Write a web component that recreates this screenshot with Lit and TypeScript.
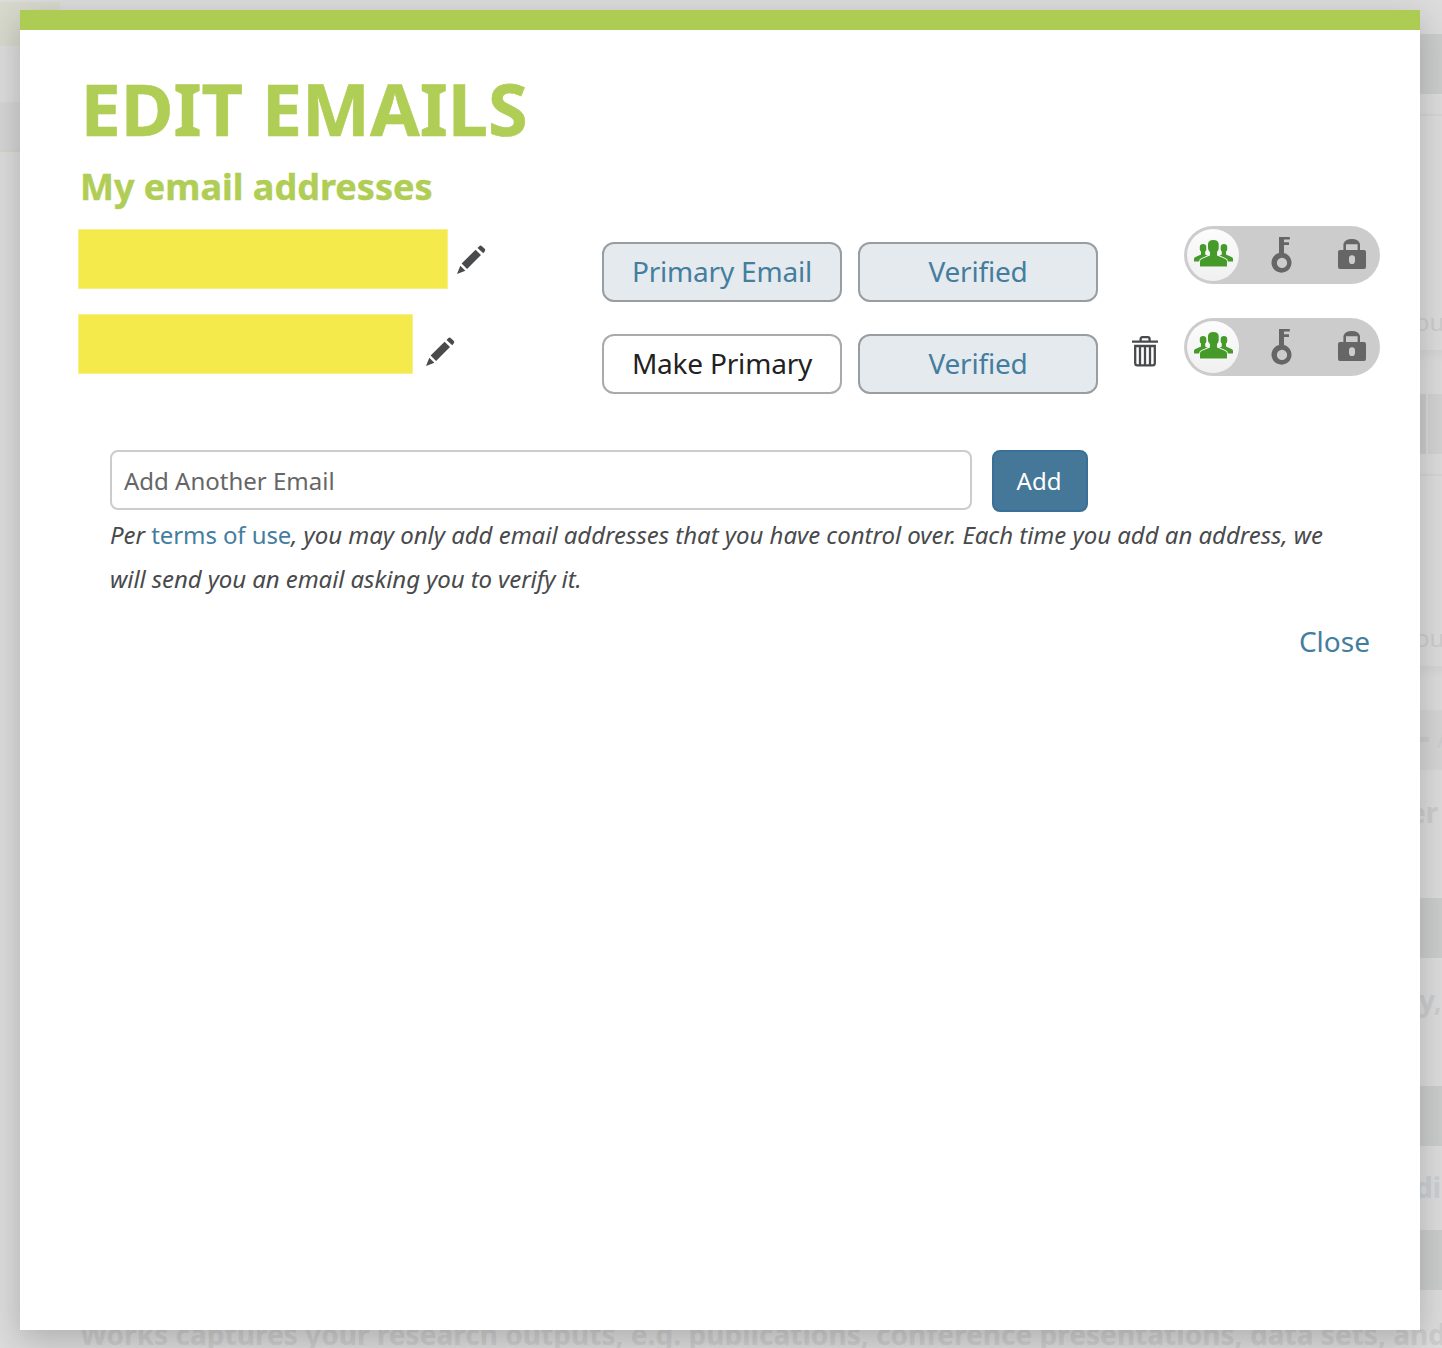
import { LitElement, html, css, svg, nothing } from "lit";
import { customElement, property, state } from "lit/decorators.js";

interface EmailEntry {
  width: number;
  primary: boolean;
}

const pencil = svg`
  <path d="M0 30 L3.4 21.4 L8.7 26.7 Z"></path>
  <path d="M4.8 19.2 L19.2 4.8 L24.8 10.4 L10.4 24.8 Z"></path>
  <path d="M21.2 3 L23 1.2 Q24.4 -.2 25.8 1.2 L28.6 4 Q30 5.4 28.6 6.8 L27.2 8.6 Z"></path>`;

const trash = svg`
  <path d="M0 5.6 H26 M8.6 5 V3.2 Q8.6 1.2 10.4 1.2 H15.8 Q17.6 1.2 17.6 3.2 V5"></path>
  <path d="M3.2 10 H22.8 V27 Q22.8 29.4 20.6 29.4 H5.4 Q3.2 29.4 3.2 27 Z M8 10 V29 M13 10 V29 M18 10 V29"></path>`;

const group = svg`
  <path d="M5.8 6.6 Q6 4 9 4 Q12.1 4 12.3 6.6 V9.4 Q12.1 10.8 11.2 11.6 V14.6 L15 16.4 V21.6 H0 V18.8 Q0 17.8 1 17.3 L7 14.6 V11.6 Q6 10.8 5.8 9.4Z"></path>
  <path d="M33.2 6.6 Q33 4 30 4 Q26.9 4 26.7 6.6 V9.4 Q26.9 10.8 27.8 11.6 V14.6 L24 16.4 V21.6 H39 V18.8 Q39 17.8 38 17.3 L32 14.6 V11.6 Q33 10.8 33.2 9.4Z"></path>
  <path class="front" d="M14 4 Q14.4 0 19.3 0 Q24.3 0 24.7 4 V8.6 Q24.4 10.8 23 12 V15.4 L31.4 19 Q33 19.8 33 21.4 V26.6 H6 V21.4 Q6 19.8 7.6 19 L16 15.4 V12 Q14.4 10.8 14 8.6Z"></path>`;

const key = svg`
  <path fill-rule="evenodd" d="M7 0 H17.8 V2.5 H12 V5.3 H17 V8 H12 V16 A10 10 0 1 1 7 16Z M10 20.8 A5.1 5.1 0 1 0 10 31.1 A5.1 5.1 0 1 0 10 20.8Z"></path>`;

const lock = svg`
  <path fill-rule="evenodd" d="M5.4 11 V5 Q7 0 13.8 0 Q20.6 0 22 5 V11 H26 Q28 11 28 13 V28 Q28 30 26 30 H2 Q0 30 0 28 V13 Q0 11 2 11Z M8 11 H19.6 V5.2 H8Z M14 16.2 A2.9 3 0 0 0 11 19 V22 A2.9 3 0 0 0 17 22 V19 A2.9 3 0 0 0 14 16.2Z"></path>`;

@customElement("privacy-toggle")
export class PrivacyToggle extends LitElement {
  static styles = css`
    :host { display: block; }
    .track {
      box-sizing: border-box;
      width: 196px;
      height: 58px;
      border-radius: 29px;
      background: #ccc;
      padding: 3px 0 0 3px;
      display: grid;
      grid-template-columns: 52px 1fr 1fr;
    }
    .seat { height: 52px; display: flex; }
    .knob {
      border-radius: 50%;
      background: linear-gradient(#fcfcfc, #f0f0f0);
      fill: #459a29;
      padding: 11px 0 0 7px;
      box-sizing: border-box;
    }
    .front { stroke: #f6f6f6; stroke-width: 1.8; paint-order: stroke; }
    .key { fill: #666; padding: 8px 0 0 32.5px; }
    .lock { fill: #666; padding: 10px 0 0 28px; }
    svg { display: block; flex: none; overflow: visible; }
  `;
  render() {
    return html`<div class="track">
      <div class="seat knob"><svg width="39" height="27">${group}</svg></div>
      <div class="seat key"><svg width="20" height="36">${key}</svg></div>
      <div class="seat lock"><svg width="28" height="30">${lock}</svg></div>
    </div>`;
  }
}

@customElement("email-row")
export class EmailRow extends LitElement {
  @property({ attribute: false }) entry!: EmailEntry;

  static styles = css`
    :host { display: block; }
    .row {
      height: 92px;
      display: grid;
      grid-template-columns: 524px 256px 240px 86px 196px;
      align-items: start;
    }
    .address { display: flex; gap: 8.5px; }
    .address.second { gap: 13px; }
    .mask {
      box-sizing: border-box;
      height: 60px;
      background: #f4ea4c;
      border: 1px solid #f7f08a;
      margin-top: 3px;
    }
    .second .mask { margin-top: -4px; }
    .pencil { fill: #494a4c; margin-top: 19px; }
    svg { display: block; overflow: visible; flex: none; }
    .pill {
      box-sizing: border-box;
      width: 240px;
      height: 60px;
      margin-top: 16px;
      border: 2px solid #989da1;
      border-radius: 12px;
      background: #e5eaee;
      color: #447e9f;
      font: 28px/54px "Noto Sans", sans-serif;
      letter-spacing: -0.2px;
      text-align: center;
      white-space: nowrap;
      padding: 0 0 2px;
    }
    .action { background: #fff; border-color: #aaa; color: #222; }
    .trash { fill: none; stroke: #494a4c; stroke-width: 2.3; margin: 18px 0 0 34px; }
  `;
  render() {
    const { primary, width } = this.entry;
    return html`<div class="row">
      <div class="address ${primary ? "" : "second"}">
        <div class="mask" style="width:${width}px"></div>
        <svg class="pencil" width="29" height="29" viewBox="0 0 30 30">${pencil}</svg>
      </div>
      ${primary
        ? html`<div class="pill">Primary Email</div>`
        : html`<button class="pill action">Make Primary</button>`}
      <div class="pill">Verified</div>
      <div>${primary ? nothing : html`<svg class="trash" width="26" height="31">${trash}</svg>`}</div>
      <privacy-toggle></privacy-toggle>
    </div>`;
  }
}

@customElement("page-backdrop")
export class PageBackdrop extends LitElement {
  static styles = css`
    :host { display: block; height: 1348px; background: #dcdcdc; overflow: hidden; }
    .page { display: grid; grid-template-columns: 60px 1fr 22px; height: 1318px; }
    .col { display: flex; flex-direction: column; overflow: hidden; }
    .logo { height: 44px; margin-top: 2px; background: #d7d9cd; }
    .tab { height: 48px; margin-top: 56px; background: #d5d5d5; border-bottom: 2px solid #d4d4cb; }
    .gap { flex: none; }
    .bar { flex: none; height: 60px; background: #cbcdcc; }
    .split { background: linear-gradient(90deg, #cbcdcc 6px, #dadada 6px 8px, #d3d3d3 8px); }
    .soft { background: #d5d5d5; }
    .rule { flex: none; height: 2px; background: #d5d5d5; }
    .fade { flex: none; height: 12px; background: linear-gradient(#d4d4d4, #dcdcdc); }
    .text {
      flex: none;
      height: 40px;
      font: 24px/40px "Noto Sans", sans-serif;
      color: #cbcdce;
      white-space: nowrap;
      display: flex;
    }
    .tall { height: 60px; line-height: 58px; }
    .dash { flex: none; width: 9px; height: 5px; margin: 27px 8px 0 0; background: #cbcdcc; }
    .bold { font-weight: 700; font-size: 28px; }
    .link { color: #c9cfd3; }
    .summary {
      font: 700 28px/32px "Noto Sans", sans-serif;
      letter-spacing: 0.04px;
      color: #cdcdcd;
      padding-left: 80px;
      white-space: nowrap;
    }
    .indent { margin-left: -5px; }
    .deep { margin-left: -11px; }
    .shallow { margin-left: -1px; }
  `;
  render() {
    return html`<div class="page">
        <div class="col"><div class="logo"></div><div class="tab"></div></div>
        <div></div>
        <div class="col">
          <div class="gap" style="height:34px"></div>
          <div class="bar"></div>
          <div class="gap" style="height:20px"></div>
          <div class="rule"></div>
          <div class="gap" style="height:186px"></div>
          <div class="text"><span class="indent">ou</span></div>
          <div class="gap" style="height:8px"></div>
          <div class="fade"></div>
          <div class="gap" style="height:32px"></div>
          <div class="bar split"></div>
          <div class="gap" style="height:20px"></div>
          <div class="rule"></div>
          <div class="gap" style="height:142px"></div>
          <div class="text"><span class="indent">ou</span></div>
          <div class="gap" style="height:8px"></div>
          <div class="fade"></div>
          <div class="gap" style="height:32px"></div>
          <div class="bar soft"><div class="text tall"><i class="dash"></i>A</div></div>
          <div class="gap" style="height:22px"></div>
          <div class="text bold"><span class="deep">er</span></div>
          <div class="gap" style="height:66px"></div>
          <div class="bar"></div>
          <div class="gap" style="height:22px"></div>
          <div class="text bold"><span class="shallow">y,</span></div>
          <div class="gap" style="height:66px"></div>
          <div class="bar"></div>
          <div class="gap" style="height:21px"></div>
          <div class="text bold link"><span class="indent">di</span></div>
          <div class="gap" style="height:23px"></div>
          <div class="bar"></div>
        </div>
      </div>
      <div class="summary">Works captures your research outputs, e.g. publications, conference presentations, data sets, and</div>`;
  }
}

@customElement("app-root")
export class AppRoot extends LitElement {
  @state() private entries: EmailEntry[] = [
    { width: 370, primary: true },
    { width: 335, primary: false },
  ];

  static styles = css`
    :host {
      display: block;
      position: relative;
      height: 1348px;
      overflow: hidden;
      font-family: "Noto Sans", sans-serif;
    }
    .modal {
      position: absolute;
      inset: 10px 22px 18px 20px;
      box-sizing: border-box;
      background: #fff;
      border-top: 20px solid #adcc54;
      box-shadow: 0 10px 32px rgba(0, 0, 0, 0.21);
      padding: 0 40px 0 58px;
    }
    h1, h2 { color: #b0cd55; font-weight: 700; margin: 0 0 0 2px; white-space: nowrap; }
    h1 {
      font-size: 72px;
      line-height: 80px;
      padding-top: 38px;
      margin-left: 2.5px;
      -webkit-text-stroke: 0.6px #b0cd55;
    }
    h2 { font-size: 36px; line-height: 46px; padding-top: 16px; -webkit-text-stroke: 0.4px #b0cd55; }
    .list { margin-top: 16px; }
    .form { display: flex; gap: 20px; margin: 40px 0 0 32px; }
    input {
      box-sizing: border-box;
      width: 862px;
      height: 60px;
      border: 2px solid #ccc;
      border-radius: 8px;
      padding: 0 12px;
      font: 24px "Noto Sans", sans-serif;
      background: #fff;
    }
    input::placeholder { color: #666; opacity: 1; }
    .add {
      box-sizing: border-box;
      width: 96px;
      height: 62px;
      border: 2px solid #3b6f97;
      border-radius: 8px;
      background: #447798;
      color: #fff;
      font: 24px "Noto Sans", sans-serif;
      padding: 0 2px 2px 0;
    }
    .note {
      margin: 1px 0 0 32px;
      width: 1240px;
      font-size: 24px;
      line-height: 44px;
      letter-spacing: -0.03px;
      font-style: italic;
      color: #494a4c;
      white-space: nowrap;
    }
    .note a { font-style: normal; color: #447e9f; letter-spacing: -0.1px; }
    .tail { letter-spacing: -0.08px; }
    .footer { display: flex; justify-content: flex-end; padding: 20px 10px 0 0; }
    .footer a { color: #447e9f; font-size: 28px; line-height: 40px; }
  `;

  render() {
    return html`<page-backdrop></page-backdrop>
      <section class="modal" role="dialog">
        <h1>EDIT EMAILS</h1>
        <h2>My email addresses</h2>
        <div class="list">
          ${this.entries.map((e) => html`<email-row .entry=${e}></email-row>`)}
        </div>
        <div class="form">
          <input placeholder="Add Another Email" />
          <button class="add">Add</button>
        </div>
        <div class="note">Per <a>terms of use</a>, you may only add email addresses that you have control over. Each time you add an address, we<br /><span class="tail">will send you an email asking you to verify it.</span></div>
        <div class="footer"><a>Close</a></div>
      </section>`;
  }
}
